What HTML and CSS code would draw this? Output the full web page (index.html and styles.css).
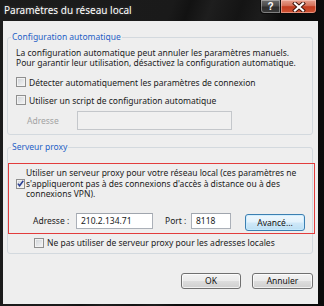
FILE: index.html
```html
<!DOCTYPE html>
<html lang="fr">
<head>
<meta charset="utf-8">
<title>Paramètres du réseau local</title>
<link rel="stylesheet" href="styles.css">
</head>
<body>
<div class="window">
  <div class="titlebar">
    <span class="title">Paramètres du réseau local</span>
    <div class="caption-btns">
      <span class="cap-btn help">?</span>
      <span class="cap-btn close">
        <svg width="14" height="10" viewBox="0 0 14 10"><path d="M3 1.5 L11 8.5 M11 1.5 L3 8.5" stroke="#3a1008" stroke-width="4" stroke-linecap="square"/><path d="M3 1.5 L11 8.5 M11 1.5 L3 8.5" stroke="#fff" stroke-width="2.2" stroke-linecap="square"/></svg>
      </span>
    </div>
  </div>
  <div class="client">
    <fieldset class="group g1">
      <legend>Configuration automatique</legend>
      <p class="desc">La configuration automatique peut annuler les paramètres manuels.<br>Pour garantir leur utilisation, désactivez la configuration automatique.</p>
      <div class="check row-a"><span class="box"></span><span>Détecter automatiquement les paramètres de connexion</span></div>
      <div class="check row-b"><span class="box"></span><span>Utiliser un script de configuration automatique</span></div>
      <div class="script-row">
        <span class="lbl disabled">Adresse</span>
        <span class="input input-disabled"></span>
      </div>
    </fieldset>
    <fieldset class="group g2">
      <legend>Serveur proxy</legend>
      <div class="highlight">
        <div class="check multi">
          <span class="box small checked"><svg width="7" height="7" viewBox="0 0 7 7"><path d="M0.8 3.6 L2.6 5.8 L6.3 0.8" fill="none" stroke="#2b3e93" stroke-width="1.5"/></svg></span>
          <span class="multi-text">Utiliser un serveur proxy pour votre réseau local (ces paramètres ne<br>s'appliqueront pas à des connexions d'accès à distance ou à des<br>connexions VPN).</span>
        </div>
        <div class="proxy-row">
          <span class="lbl addr-lbl">Adresse :</span>
          <span class="input addr-input">210.2.134.71</span>
          <span class="lbl port-lbl">Port :</span>
          <span class="input port-input">8118</span>
          <span class="btn btn-default">Avancé...</span>
        </div>
      </div>
      <div class="check row-local"><span class="box"></span><span>Ne pas utiliser de serveur proxy pour les adresses locales</span></div>
    </fieldset>
    <div class="buttons">
      <span class="btn btn-ok">OK</span>
      <span class="btn btn-cancel">Annuler</span>
    </div>
  </div>
</div>
</body>
</html>
```
FILE: styles.css
```css
html, body {
  margin: 0;
  padding: 0;
}
body {
  width: 324px;
  height: 306px;
  overflow: hidden;
  font-family: "Noto Sans", "Open Sans", sans-serif;
  font-size: 8.5px;
  color: #1b1b1b;
}
.window {
  width: 324px;
  height: 306px;
  display: flex;
  flex-direction: column;
  background:
    linear-gradient(110deg, #1c1c1c 0%, #1a1a1a 40%, #121212 44%, #1e1e1e 49%, #141414 56%, #1c1c1c 61%, #0c0c0c 66%, #0a0a0a 100%);
}
.titlebar {
  height: 21px;
  display: flex;
  justify-content: space-between;
  align-items: flex-start;
  flex: none;
}
.title {
  color: #fff;
  font-size: 10px;
  line-height: 21px;
  padding-left: 4px;
  text-shadow: 0 0 3px rgba(255,255,255,0.25);
}
.caption-btns {
  display: flex;
  margin-right: 7px;
}
.cap-btn {
  height: 14px;
  box-sizing: border-box;
  border: 1px solid #0a0a0a;
  border-top: none;
  display: flex;
  align-items: center;
  justify-content: center;
}
.help {
  width: 21px;
  border-radius: 0 0 0 4px;
  background: linear-gradient(#6a6a6a, #4a4a4a 45%, #2c2c2c 55%, #3c3c3c);
  box-shadow: inset 0 0 0 1px rgba(255,255,255,0.35);
  color: #fff;
  font-weight: bold;
  font-size: 10px;
  font-family: "Liberation Sans", sans-serif;
  line-height: 13px;
}
.close {
  width: 36px;
  border-left: none;
  border-radius: 0 0 4px 0;
  background: linear-gradient(#e7a18f, #d5735c 42%, #c23c1f 52%, #cf5334);
  box-shadow: inset 0 0 0 1px rgba(255,220,210,0.45);
}
.client {
  flex: 1;
  margin: 0 6px 2px 3px;
  background: #eeeeee;
  display: flex;
  flex-direction: column;
}
.group {
  margin: 0 5px 0 4px;
  padding: 0 0 4px 0;
  border: 1px solid #d3d9de;
  border-radius: 3px;
  min-width: 0;
}
.group legend {
  margin-left: 3px;
  padding: 0 1px;
  line-height: 12px;
  color: #1f5fc6;
}
.g1 {
  margin-top: 10px;
}
.g2 {
  margin-top: 6px;
}
.desc {
  margin: 5px 0 0 8px;
  line-height: 10px;
  white-space: nowrap;
}
.check {
  display: flex;
  align-items: center;
  height: 12px;
  white-space: nowrap;
}
.box {
  width: 10px;
  height: 10px;
  box-sizing: border-box;
  border: 1px solid #8f8f8f;
  background: linear-gradient(135deg, #cdd1d6, #f7f7f7);
  box-shadow: inset 0 0 0 1px #f2f2f2;
  flex: none;
  margin-right: 3px;
  display: flex;
  align-items: center;
  justify-content: center;
}
.box.small {
  width: 9px;
  height: 10px;
  margin-right: 1px;
}
.row-a {
  margin: 8px 0 0 8px;
}
.row-b {
  margin: 6px 0 0 8px;
}
.script-row {
  display: flex;
  align-items: center;
  margin: 5px 0 0 19px;
  height: 19px;
}
.lbl {
  white-space: nowrap;
  flex: none;
}
.lbl.disabled {
  width: 50px;
  color: #a3a3a3;
}
.input {
  box-sizing: border-box;
  border: 1px solid #abb0b8;
  border-top-color: #a0a5ad;
  background: #fff;
  flex: none;
  padding-left: 4px;
  line-height: 14px;
  white-space: nowrap;
}
.input-disabled {
  width: 155px;
  height: 19px;
  background: #f0f0f0;
  border-color: #c4c7cb;
}
.highlight {
  margin: 10px -3px 0 0;
  border: 1px solid #e23c3c;
  padding: 4px 0 2px 0;
}
.multi {
  height: auto;
  align-items: center;
}
.multi .box {
  margin-left: 7px;
}
.multi-text {
  line-height: 10.5px;
}
.proxy-row {
  display: flex;
  align-items: flex-start;
  margin: 13px 0 0 24px;
  height: 18px;
}
.addr-lbl {
  width: 43px;
  line-height: 16px;
}
.addr-input {
  width: 77px;
  height: 16px;
}
.port-lbl {
  margin-left: 12px;
  width: 26px;
  line-height: 16px;
}
.port-input {
  width: 40px;
  height: 16px;
}
.btn {
  box-sizing: border-box;
  display: flex;
  align-items: center;
  justify-content: center;
  border: 1px solid #707070;
  border-radius: 3px;
  background: linear-gradient(#f3f3f3, #ebebeb 48%, #dddddd 52%, #cfcfcf);
  box-shadow: inset 0 0 0 1px rgba(255,255,255,0.7);
  color: #111;
  flex: none;
}
.btn-default {
  width: 60px;
  height: 17px;
  margin: 1px 0 0 14px;
  border-color: #3c7fb1;
  background: linear-gradient(#eef7fd, #e3f2fc 48%, #cfe8f8 52%, #bcdff4);
  box-shadow: inset 0 0 0 1px rgba(200,235,255,0.8);
}
.row-local {
  margin: 3px 0 0 26px;
}
.buttons {
  display: flex;
  justify-content: flex-end;
  gap: 11px;
  margin: 19px 5px 0 0;
}
.btn-ok {
  width: 60px;
  height: 16px;
}
.btn-cancel {
  width: 61px;
  height: 16px;
}
```
